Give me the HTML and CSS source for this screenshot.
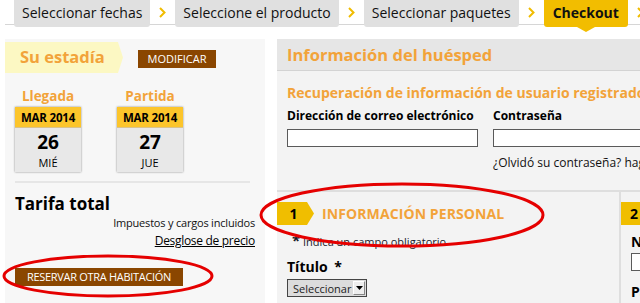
FILE: index.html
```html
<!DOCTYPE html>
<html lang="es">
<head>
<meta charset="utf-8">
<link rel="stylesheet" href="styles.css">
</head>
<body>
<nav class="crumbs">
  <span class="tab">Seleccionar fechas</span>
  <span class="chev"><svg width="7" height="11" viewBox="0 0 7 11"><path d="M1 1l4.5 4.5L1 10" fill="none" stroke="#f0bc00" stroke-width="2"/></svg></span>
  <span class="tab">Seleccione el producto</span>
  <span class="chev"><svg width="7" height="11" viewBox="0 0 7 11"><path d="M1 1l4.5 4.5L1 10" fill="none" stroke="#f0bc00" stroke-width="2"/></svg></span>
  <span class="tab">Seleccionar paquetes</span>
  <span class="chev"><svg width="7" height="11" viewBox="0 0 7 11"><path d="M1 1l4.5 4.5L1 10" fill="none" stroke="#f0bc00" stroke-width="2"/></svg></span>
  <span class="tab tab-active">Checkout</span>
  <span class="chev"><svg width="7" height="11" viewBox="0 0 7 11"><path d="M1 1l4.5 4.5L1 10" fill="none" stroke="#f0bc00" stroke-width="2"/></svg></span>
</nav>

<main class="main">
  <aside class="left">
    <div class="stay-row">
      <div class="stay-banner">Su estadía</div>
      <button class="btn btn-mod">MODIFICAR</button>
    </div>
    <div class="dates">
      <div class="date">
        <div class="date-label">Llegada</div>
        <div class="cal">
          <div class="cal-month">MAR 2014</div>
          <div class="cal-day">26</div>
          <div class="cal-wd">MIÉ</div>
        </div>
      </div>
      <div class="date">
        <div class="date-label">Partida</div>
        <div class="cal">
          <div class="cal-month">MAR 2014</div>
          <div class="cal-day">27</div>
          <div class="cal-wd">JUE</div>
        </div>
      </div>
    </div>
    <div class="sep"></div>
    <div class="total-title">Tarifa total</div>
    <div class="taxes">Impuestos y cargos incluidos</div>
    <div class="breakdown"><a>Desglose de precio</a></div>
    <button class="btn btn-reserve">RESERVAR OTRA HABITACIÓN</button>
  </aside>

  <section class="right">
    <h1 class="guest-head">Información del huésped</h1>
    <div class="login">
      <h2 class="login-title">Recuperación de información de usuario registrado</h2>
      <div class="login-row">
        <div class="field">
          <label class="lbl">Dirección de correo electrónico</label>
          <div class="input"></div>
        </div>
        <div class="field">
          <label class="lbl">Contraseña</label>
          <div class="input input-wide"></div>
          <div class="forgot">¿Olvidó su contraseña? haga clic aquí</div>
        </div>
      </div>
    </div>
    <div class="cols">
      <div class="col col-1">
        <div class="sec-head">
          <span class="sec-num">1</span>
          <span class="sec-title">INFORMACIÓN PERSONAL</span>
        </div>
        <div class="req"><span class="ast">*</span> Indica un campo obligatorio</div>
        <div class="lbl-big">Título <span class="ast-big">*</span></div>
        <div class="select"><span>Seleccionar</span><span class="sel-btn"><svg width="7" height="4" viewBox="0 0 7 4"><path d="M0 0h7L3.5 4z" fill="#000"/></svg></span></div>
      </div>
      <div class="col col-2">
        <div class="sec-head">
          <span class="sec-num">2</span>
        </div>
        <div class="lbl-big lbl-c2">Nombre</div>
        <div class="input input-c2"></div>
        <div class="lbl-big lbl-c2 lbl-pa">País</div>
      </div>
    </div>
  </section>
</main>

<svg class="marks" width="640" height="303" viewBox="0 0 640 303">
  <ellipse cx="108" cy="276" rx="104" ry="20" fill="none" stroke="#e50000" stroke-width="3"/>
  <ellipse cx="402" cy="215" rx="141" ry="31" fill="none" stroke="#e50000" stroke-width="3"/>
</svg>
</body>
</html>
```

FILE: styles.css
```css
* { box-sizing: border-box; }
html, body { margin: 0; padding: 0; }
body {
  width: 640px;
  height: 303px;
  overflow: hidden;
  background: #fff;
  font-family: "Open Sans", "DejaVu Sans", sans-serif;
  color: #000;
  position: relative;
}

/* breadcrumbs */
.crumbs {
  display: flex;
  align-items: flex-start;
  height: 27px;
  margin-left: 5px;
  padding-left: 9px;
  background: linear-gradient(to bottom, transparent 24px, #d6d6d6 24px, #d6d6d6 25px, transparent 25px);
}
.tab {
  height: 27px;
  line-height: 26px;
  padding: 0 8px;
  background: #e0e0e0;
  border-radius: 0 0 3px 3px;
  font-size: 14px;
  color: #111;
  white-space: nowrap;
  flex: none;
}
.tab-active {
  position: relative;
  background: #f2bd00;
  font-weight: 700;
  padding: 0 9px;
}
.tab-active::after {
  content: "";
  position: absolute;
  left: 50%;
  bottom: -5px;
  margin-left: -9px;
  border-left: 9px solid transparent;
  border-right: 9px solid transparent;
  border-top: 5px solid #f2bd00;
}
.chev {
  width: 25px;
  flex: none;
  display: flex;
  justify-content: center;
  padding-top: 7px;
}

/* main */
.main {
  display: flex;
  gap: 12px;
  margin-top: 12px;
  margin-left: 5px;
  height: 264px;
}
.left {
  width: 260px;
  flex: none;
  background: #f7f7f7;
  padding: 3px 10px 0 0;
}
.stay-row {
  display: flex;
  align-items: flex-start;
}
.stay-banner {
  width: 118px;
  height: 31px;
  background: #fcf8c3;
  clip-path: polygon(0 0, 113px 0, 118px 50%, 113px 100%, 0 100%);
  color: #f2a33a;
  font-weight: 700;
  font-size: 16.5px;
  line-height: 30px;
  padding-left: 15px;
}
.btn {
  border: 0;
  background: #8a4600;
  color: #fff;
  font-family: "Open Sans", "DejaVu Sans", sans-serif;
  font-size: 11px;
  height: 18px;
  line-height: 18px;
  padding: 0;
  margin: 0;
}
.btn-mod {
  width: 78px;
  margin-left: 15px;
  margin-top: 8px;
}
.dates {
  display: flex;
  gap: 36px;
  padding-left: 10px;
  margin-top: 15px;
}
.date { width: 66px; }
.date-label {
  text-align: center;
  color: #f2a33a;
  font-weight: 700;
  font-size: 13.5px;
  line-height: 17px;
  height: 19px;
}
.cal {
  width: 66px;
  height: 65px;
  background: #e8e8e8;
  box-shadow: 0 0 2px rgba(0,0,0,0.45);
  text-align: center;
}
.cal-month {
  background: #fcc52b;
  height: 21px;
  line-height: 21px;
  font-weight: 700;
  font-size: 11.5px;
  letter-spacing: -0.2px;
  border-bottom: 1px solid #d9c38a;
}
.cal-day {
  font-weight: 700;
  font-size: 19px;
  line-height: 22px;
  margin-top: 3px;
}
.cal-wd {
  font-size: 11px;
  line-height: 14px;
  margin-top: 3px;
}
.sep {
  margin: 9px 0 0 10px;
  width: 235px;
  height: 2px;
  background: #e6e6e6;
}
.total-title {
  margin: 10px 0 0 10px;
  font-weight: 700;
  font-size: 17px;
  line-height: 22px;
}
.taxes {
  text-align: right;
  font-size: 11px;
  letter-spacing: -0.2px;
  line-height: 16px;
  margin-top: 0;
  color: #111;
}
.breakdown {
  text-align: right;
  font-size: 12px;
  letter-spacing: -0.3px;
  line-height: 18px;
  margin-top: 1px;
}
.breakdown a { text-decoration: underline; color: #000; }
.btn-reserve {
  display: block;
  width: 168px;
  margin: 18px 0 0 10px;
  letter-spacing: -0.3px;
}

/* right */
.right {
  flex: none;
  width: 420px;
  background: #f3f3f3;
}
.guest-head {
  margin: 0;
  height: 32px;
  line-height: 31px;
  background: #e6e6e6;
  border-bottom: 1px solid #d3d3d3;
  color: #f2a33a;
  font-size: 16.5px;
  font-weight: 700;
  padding-left: 10px;
  white-space: nowrap;
}
.login { padding: 0 0 0 10px; height: 121px; border-bottom: 2px solid #dedede; }
.login-title {
  margin: 0;
  padding-top: 12px;
  color: #f2a33a;
  font-size: 14px;
  font-weight: 700;
  line-height: 20px;
  white-space: nowrap;
}
.login-row {
  display: flex;
  gap: 15px;
  margin-top: 4px;
}
.lbl {
  display: block;
  font-weight: 700;
  font-size: 12px;
  line-height: 18px;
  white-space: nowrap;
}
.input {
  margin-top: 4px;
  width: 191px;
  height: 18px;
  background: #fff;
  border: 1px solid #5a5a5a;
}
.input-wide { width: 200px; }
.forgot {
  margin-top: 8px;
  font-size: 12px;
  line-height: 16px;
  white-space: nowrap;
  color: #111;
}
.cols {
  display: flex;
}
.col-1 {
  width: 344px;
  border-right: 2px solid #dedede;
  padding-top: 10px;
  height: 120px;
}
.col-2 {
  padding-top: 10px;
  flex: 1;
}
.sec-head {
  display: flex;
  align-items: center;
  height: 23px;
}
.sec-num {
  width: 37px;
  height: 23px;
  background: #f0be00;
  clip-path: polygon(0 0, 30px 0, 37px 50%, 30px 100%, 0 100%);
  font-weight: 700;
  font-size: 14px;
  line-height: 23px;
  text-align: center;
  padding-right: 4px;
}
.col-2 .sec-num {
  clip-path: none;
  width: 30px;
}
.sec-title {
  margin-left: 8px;
  color: #f2a33a;
  font-weight: 700;
  font-size: 14px;
  letter-spacing: 0.1px;
}
.req {
  margin: 8px 0 0 15px;
  font-size: 11px;
  line-height: 14px;
  color: #1a1a2a;
}
.ast { font-weight: 700; font-size: 15px; }
.lbl-big {
  margin: 9px 0 0 10px;
  font-weight: 700;
  font-size: 14px;
  line-height: 18px;
}
.ast-big { margin-left: 3px; }
.select {
  margin: 3px 0 0 10px;
  width: 80px;
  height: 18px;
  background: #dcdcdc;
  border: 1px solid #444;
  display: flex;
  align-items: center;
  justify-content: space-between;
  font-size: 11px;
  padding-left: 5px;
  color: #222;
}
.sel-btn {
  width: 12px;
  height: 14px;
  margin-right: 1px;
  background: #eee;
  border: 1px solid #888;
  border-top-color: #fff;
  border-left-color: #fff;
  display: flex;
  align-items: center;
  justify-content: center;
}
.lbl-c2 { margin-top: 8px; }
.input-c2 { margin: 2px 0 0 10px; width: 30px; }
.lbl-pa { margin-top: 12px; }

.marks {
  position: absolute;
  left: 0;
  top: 0;
  pointer-events: none;
}
```
